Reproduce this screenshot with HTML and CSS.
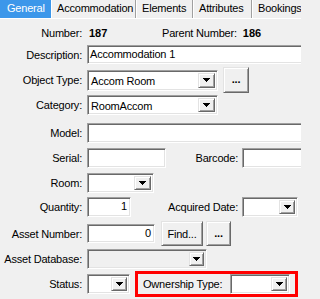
FILE: index.html
```html
<!DOCTYPE html>
<html>
<head>
<meta charset="utf-8">
<link rel="stylesheet" href="styles.css">
</head>
<body>
<div class="tabs">
  <div class="tab active t-gen">General</div>
  <div class="tab t-acc">Accommodation</div>
  <div class="tab t-el">Elements</div>
  <div class="tab t-at">Attributes</div>
  <div class="tab t-bo">Bookings</div>
</div>
<div class="form">
  <div class="row r-num">
    <span class="lbl">Number:</span>
    <span class="val num-val">187</span>
    <span class="plbl">Parent Number:</span>
    <span class="val">186</span>
  </div>
  <div class="row r-desc">
    <span class="lbl">Description:</span>
    <div class="sunken field f-wide">Accommodation 1</div>
  </div>
  <div class="row r-obj">
    <span class="lbl">Object Type:</span>
    <div class="sunken combo c-type"><span class="ctext">Accom Room</span><span class="raised dd"><svg width="7" height="4" viewBox="0 0 7 4"><polygon points="0,0 7,0 3.5,4" fill="#000"/></svg></span></div>
    <div class="raised btn b-dots">...</div>
  </div>
  <div class="row r-cat">
    <span class="lbl">Category:</span>
    <div class="sunken combo c-type"><span class="ctext">RoomAccom</span><span class="raised dd"><svg width="7" height="4" viewBox="0 0 7 4"><polygon points="0,0 7,0 3.5,4" fill="#000"/></svg></span></div>
  </div>
  <div class="row r-model">
    <span class="lbl">Model:</span>
    <div class="sunken field f-wide"></div>
  </div>
  <div class="row r-serial">
    <span class="lbl">Serial:</span>
    <div class="sunken field f-serial"></div>
    <span class="lbl2 l-barcode">Barcode:</span>
    <div class="sunken field f-barcode"></div>
  </div>
  <div class="row r-room">
    <span class="lbl">Room:</span>
    <div class="sunken combo c-room"><span class="ctext"></span><span class="raised dd"><svg width="7" height="4" viewBox="0 0 7 4"><polygon points="0,0 7,0 3.5,4" fill="#000"/></svg></span></div>
  </div>
  <div class="row r-qty">
    <span class="lbl">Quantity:</span>
    <div class="sunken field f-qty num">1</div>
    <span class="lbl2 l-acq">Acquired Date:</span>
    <div class="sunken combo c-acq"><span class="ctext"></span><span class="raised dd"><svg width="7" height="4" viewBox="0 0 7 4"><polygon points="0,0 7,0 3.5,4" fill="#000"/></svg></span></div>
  </div>
  <div class="row r-anum">
    <span class="lbl">Asset Number:</span>
    <div class="sunken field f-anum num">0</div>
    <div class="raised btn b-find">Find...</div>
    <div class="raised btn b-dots2">...</div>
  </div>
  <div class="row r-adb">
    <span class="lbl">Asset Database:</span>
    <div class="sunken combo c-adb disabled"><span class="ctext"></span><span class="raised dd"><svg width="7" height="4" viewBox="0 0 7 4"><polygon points="0,0 7,0 3.5,4" fill="#000"/></svg></span></div>
  </div>
  <div class="row r-status">
    <span class="lbl">Status:</span>
    <div class="sunken combo c-status"><span class="ctext"></span><span class="raised dd"><svg width="7" height="4" viewBox="0 0 7 4"><polygon points="0,0 7,0 3.5,4" fill="#000"/></svg></span></div>
    <div class="highlight">
      <span class="own-lbl">Ownership Type:</span>
      <div class="sunken combo c-own"><span class="ctext"></span><span class="raised dd"><svg width="7" height="4" viewBox="0 0 7 4"><polygon points="0,0 7,0 3.5,4" fill="#000"/></svg></span></div>
    </div>
  </div>
</div>
</body>
</html>
```
FILE: styles.css
```css
html, body {
  margin: 0;
  padding: 0;
}
body {
  width: 301px;
  height: 299px;
  overflow: hidden;
  background: #f0f0f0;
  font-family: "Liberation Sans", Arial, sans-serif;
  font-size: 11px;
  letter-spacing: -0.2px;
  color: #000;
}
.tabs {
  display: flex;
  height: 18px;
  border-bottom: 1px solid #fff;
  white-space: nowrap;
}
.tab {
  box-sizing: border-box;
  height: 18px;
  line-height: 17px;
  padding-left: 5px;
  flex: none;
  border-left: 1px solid #fff;
  border-right: 1px solid #a0a0a0;
  overflow: hidden;
}
.tab.active {
  background: #3c97ea;
  color: #fff;
  border: none;
  padding-left: 7px;
}
.t-gen { width: 51px; }
.t-acc { width: 85px; }
.t-el { width: 57px; }
.t-at { width: 59px; }
.t-bo { width: 60px; }

.form {
  display: flex;
  flex-direction: column;
}
.row {
  display: flex;
  align-items: center;
  white-space: nowrap;
}
.lbl {
  flex: none;
  width: 82px;
  margin-right: 5px;
  text-align: right;
}
.r-num { height: 20px; margin-top: 4px; }
.r-desc { height: 19px; margin-top: 2px; }
.r-obj { height: 26px; margin-top: 3px; }
.r-cat { height: 20px; margin-top: 2px; }
.r-model { height: 20px; margin-top: 8px; }
.r-serial { height: 20px; margin-top: 5px; }
.r-room { height: 20px; margin-top: 5px; }
.r-qty { height: 20px; margin-top: 4px; }
.r-anum { height: 25px; margin-top: 4px; }
.r-adb { height: 20px; margin-top: 3px; }
.r-status { height: 26px; margin-top: 2px; }

.val { font-weight: bold; font-size: 11px; letter-spacing: 0; }
.num-val { width: 73px; padding-left: 2px; flex: none; }
.plbl { margin-right: 6px; }

.sunken {
  box-sizing: border-box;
  flex: none;
  border: 1px solid;
  border-color: #a0a0a0 #fff #fff #a0a0a0;
  box-shadow: inset 1px 1px #696969, inset -1px -1px #e3e3e3;
  padding: 1px;
  background: #fff;
}
.raised {
  box-sizing: border-box;
  border: 1px solid;
  border-color: #e3e3e3 #696969 #696969 #e3e3e3;
  box-shadow: inset 1px 1px #fff, inset -1px -1px #a0a0a0;
  background: #f0f0f0;
}
.field {
  height: 100%;
  line-height: 15px;
  padding-left: 2px;
  overflow: hidden;
}
.r-desc .field { height: 19px; }
.r-model .field, .r-serial .field, .r-qty .field { height: 20px; }
.field.num { text-align: right; padding-right: 3px; }
.f-wide { width: 232px; }
.f-serial { width: 79px; }
.f-barcode { width: 80px; }
.f-qty { width: 44px; }
.f-anum { width: 68px; height: 19px !important; }

.lbl2 { flex: none; text-align: right; margin-right: 4px; }
.l-barcode { width: 72px; }
.l-acq { width: 107px; }

.combo {
  display: flex;
  height: 20px;
  padding: 2px;
}
.r-obj .combo { height: 21px; }
.ctext {
  flex: 1;
  line-height: 16px;
  padding-left: 1px;
  overflow: hidden;
}
.dd {
  flex: none;
  width: 17px;
  height: 100%;
  display: flex;
  align-items: center;
  justify-content: center;
}
.dd svg { display: block; shape-rendering: crispEdges; }
.c-type { width: 131px; }
.c-room { width: 67px; }
.c-acq { width: 56px; }
.c-adb { width: 120px; }
.c-status { width: 43px; }
.c-own { width: 60px; }
.combo.disabled { background: #f0f0f0; }
.c-adb .dd { width: 15px; }
.c-status .dd, .c-acq .dd, .c-own .dd { width: 16px; }

.btn {
  flex: none;
  display: flex;
  align-items: center;
  justify-content: center;
  color: #000;
}
.b-dots { width: 26px; height: 26px; margin-left: 5px; font-weight: bold; padding-bottom: 2px; }
.b-find { width: 42px; height: 25px; margin-left: 6px; }
.b-dots2 { width: 25px; height: 25px; margin-left: 3px; font-weight: bold; padding-bottom: 2px; }

.highlight {
  box-sizing: border-box;
  flex: none;
  display: flex;
  align-items: center;
  width: 163px;
  height: 26px;
  margin-left: 5px;
  border: 3px solid #ff0000;
  padding-left: 5px;
}
.own-lbl { flex: 1; }
.c-own { margin-right: 5px; }
```
